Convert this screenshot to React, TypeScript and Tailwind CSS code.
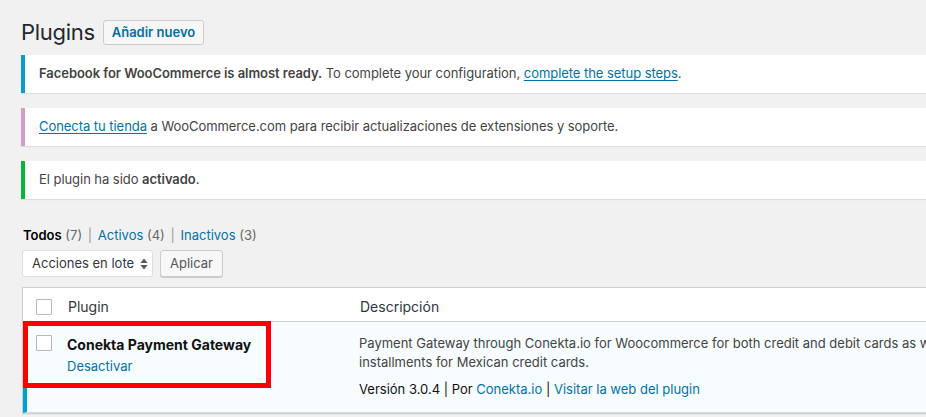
import React from 'react';

const font = "font-['Inter','Liberation_Sans',sans-serif]";

function Notice({ color, children }: { color: string; children: React.ReactNode }) {
  return (
    <div
      className={`h-[38px] flex items-center bg-white border-l-4 ${color} pl-[14px] shadow-[0_1px_1px_rgba(0,0,0,0.08)] -mr-10 text-[13px] text-[#444] whitespace-nowrap tracking-[-0.05px]`}
    >
      <p>{children}</p>
    </div>
  );
}

function Checkbox() {
  return <span className="block w-4 h-4 bg-white border border-[#b4b9be] rounded-[1px]" />;
}

export default function App() {
  return (
    <div className={`${font} w-[926px] h-[417px] overflow-hidden bg-[#f1f1f1] pl-[21px] pt-[18px] antialiased`}>
      {/* Cabecera */}
      <div className="h-[29px] flex items-center gap-[8px]">
        <h1 className="text-[22px] leading-[29px] text-[#23282d] font-normal tracking-[-0.3px]">Plugins</h1>
        <button className="h-[25px] px-[8px] bg-[#f7f7f7] border border-[#ccc] rounded-[3px] text-[13px] font-semibold text-[#0071a1]">
          Añadir nuevo
        </button>
      </div>

      {/* Avisos */}
      <div className="mt-[8px] flex flex-col gap-[15px]">
        <Notice color="border-[#00a0d2]">
          <strong className="font-semibold">Facebook for WooCommerce is almost ready.</strong> To complete your
          configuration,{' '}
          <a className="text-[#0073aa] underline underline-offset-2">complete the setup steps</a>.
        </Notice>
        <Notice color="border-[#d59bcb]">
          <a className="text-[#0073aa] underline underline-offset-2">Conecta tu tienda</a> a WooCommerce.com para
          recibir actualizaciones de extensiones y soporte.
        </Notice>
        <Notice color="border-[#00ba37]">
          El plugin ha sido <strong className="font-semibold">activado</strong>.
        </Notice>
      </div>

      {/* Filtros */}
      <div className="mt-[27px] ml-[2px] text-[13px] leading-[19px] text-[#666] whitespace-nowrap">
        <span className="font-semibold text-black">Todos</span> (7) <span className="mx-[2px] text-[#999]">|</span>{' '}
        <a className="text-[#0073aa]">Activos</a> (4) <span className="mx-[2px] text-[#999]">|</span>{' '}
        <a className="text-[#0073aa]">Inactivos</a> (3)
      </div>

      <div className="mt-[5px] ml-[1px] flex items-start gap-[7px]">
        <div className="h-[27px] w-[131px] bg-white border border-[#ddd] rounded-[3px] flex items-center justify-between pl-[9px] pr-[4px] text-[13px] text-[#32373c] whitespace-nowrap">
          <span>Acciones en lote</span>
          <svg width="8" height="12" viewBox="0 0 8 12" className="text-[#555] shrink-0">
            <path d="M4 0.5 L7.5 5 H0.5 Z" fill="currentColor" />
            <path d="M4 11.5 L7.5 7 H0.5 Z" fill="currentColor" />
          </svg>
        </div>
        <button className="h-[27px] w-[63px] bg-[#f7f7f7] border border-[#ccc] rounded-[3px] shadow-[0_1px_0_#ccc] text-[13px] text-[#555]">
          Aplicar
        </button>
      </div>

      {/* Tabla */}
      <div className="relative mt-[10px] ml-[1px] -mr-10 bg-white border border-[#ccd0d4] shadow-[0_1px_1px_rgba(0,0,0,0.04)]">
        <div className="h-[34px] pt-[4px] flex items-center border-b border-[#ccd0d4] text-[14px] text-[#32373c]">
          <div className="w-[45px] shrink-0 pl-[13px] flex items-center">
            <Checkbox />
          </div>
          <div className="w-[292px] shrink-0">Plugin</div>
          <div className="whitespace-nowrap">Descripción</div>
        </div>

        <div className="flex bg-[#f7fcfe] border-l-4 border-[#00a0d2] h-[91px] border-b border-b-[#dcdcde]">
          <div className="w-[40px] shrink-0 pl-[9px] pt-[13px]">
            <Checkbox />
          </div>
          <div className="w-[292px] shrink-0 pt-[13px]">
            <div className="text-[14px] leading-[20px] font-bold text-[#111]">Conekta Payment Gateway</div>
            <a className="block mt-[1px] text-[13px] leading-[20px] text-[#0073aa]">Desactivar</a>
          </div>
          <div className="pt-[12px] text-[13px] text-[#444] whitespace-nowrap">
            <p className="leading-[19px]">
              Payment Gateway through Conekta.io for Woocommerce for both credit and debit cards as well as monthly
            </p>
            <p className="leading-[19px]">installments for Mexican credit cards.</p>
            <p className="mt-[8px] leading-[19px] text-[#111]">
              Versión 3.0.4 | Por <a className="text-[#0073aa]">Conekta.io</a> |{' '}
              <a className="text-[#0073aa]">Visitar la web del plugin</a>
            </p>
          </div>
        </div>

        {/* Marca roja */}
        <div className="absolute left-[0px] top-[33px] w-[248px] h-[67px] border-[5px] border-[#f00] pointer-events-none" />
      </div>
    </div>
  );
}
